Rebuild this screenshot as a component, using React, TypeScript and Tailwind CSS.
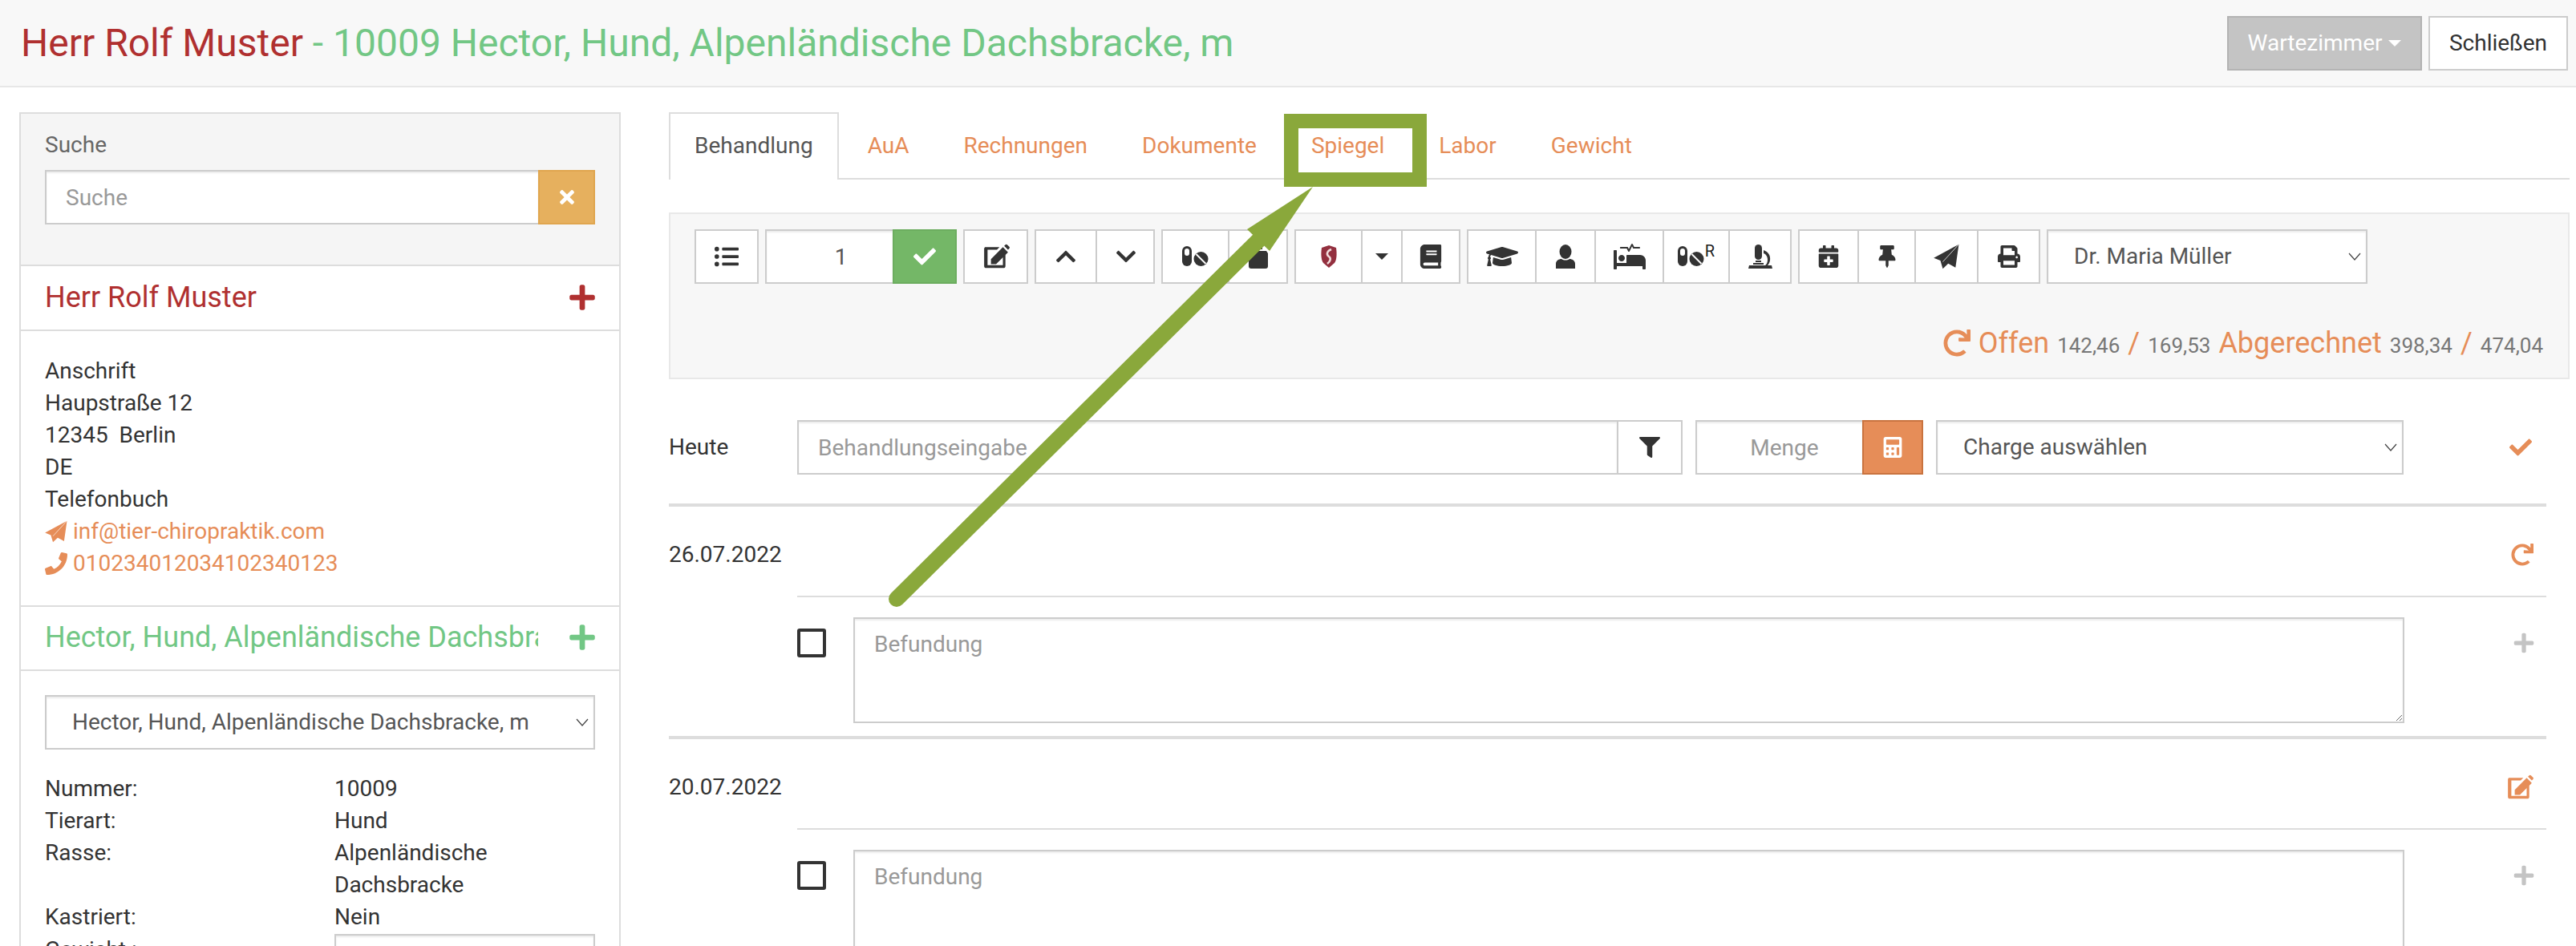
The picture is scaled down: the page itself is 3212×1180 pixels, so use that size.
import type { ReactNode } from "react";
import {
  FaBook,
  FaCalculator,
  FaCalendarPlus,
  FaCheck,
  FaChevronDown,
  FaChevronUp,
  FaFilter,
  FaGraduationCap,
  FaListUl,
  FaPhone,
  FaPlus,
  FaPrint,
  FaProcedures,
  FaRedo,
  FaThumbtack,
  FaTimes,
} from "react-icons/fa";

function Chevron() {
  return (
    <svg width="16" height="10" viewBox="0 0 16 10" className="pointer-events-none absolute right-[8px] top-1/2 -mt-[5px]">
      <path d="M1 1l7 8 7-8" fill="none" stroke="#444" strokeWidth="1.2" />
    </svg>
  );
}

function Select({ label, className }: { label: string; className: string }) {
  return (
    <div className={`relative h-[68px] shrink-0 ${className}`}>
      <select className="h-full w-full appearance-none border-2 border-[#ccc] bg-white pl-[32px] pr-[30px] text-[#555] shadow-[inset_0_2px_2px_rgba(0,0,0,0.075)]">
        <option>{label}</option>
      </select>
      <Chevron />
    </div>
  );
}

function SendIcon({ size = 28 }: { size?: number }) {
  return (
    <svg width={size} height={size} viewBox="0 0 84 85" fill="currentColor">
      <path d="M83 2L0 47l22 9 8 27 18-17 24 13z" />
      <path d="M83 2L30 60" stroke="#fff" strokeWidth="2" />
    </svg>
  );
}

function EditIcon({ size = 34 }: { size?: number }) {
  return (
    <svg width={size} height={size} viewBox="0 0 32 32" fill="currentColor">
      <path d="M3 5h17l-3 3H6v18h18V16l3-3v14a2.500 2.500 0 0 1-2.500 2.500h-20A2.500 2.500 0 0 1 2 27V7.500A2.500 2.500 0 0 1 3 5z" />
      <path d="M10 25v-6L24 5l6 6-14 14zM25.500 3.500l1.500-1.500a1.500 1.500 0 0 1 2 0l2.500 2.500a1.500 1.500 0 0 1 0 2l-1.500 1.500z" />
    </svg>
  );
}

function PillsIcon() {
  return (
    <svg width="33" height="26" viewBox="0 0 33 26">
      <rect x="0" y="0" width="12" height="25" rx="6" fill="#333" />
      <rect x="3" y="3" width="6" height="9" rx="3" fill="#fff" />
      <circle cx="23.500" cy="16" r="9" fill="#333" />
      <path d="M17.500 10l12 12" stroke="#fff" strokeWidth="2" />
    </svg>
  );
}

function ShieldLogo() {
  return (
    <svg width="22" height="28" viewBox="0 0 22 28" className="blur-[0.6px]">
      <path d="M2 3l9-3 9 3c1 7 1 15-2 19l-7 6-7-6C1 18 1 10 2 3z" fill="#93303f" />
      <path d="M14 5c-5 2-7 6-3 9 3 2 2 6-2 9" fill="none" stroke="#f0dcdc" strokeWidth="2.500" />
    </svg>
  );
}

function BottleIcon() {
  return (
    <svg width="26" height="30" viewBox="0 0 26 30" fill="#333">
      <rect x="8" y="0" width="10" height="6" />
      <path d="M3 8h20l2 3v16a3 3 0 0 1-3 3H4a3 3 0 0 1-3-3V11z" />
    </svg>
  );
}

function UserIcon() {
  return (
    <svg width="26" height="30" viewBox="0 0 26 30" fill="#333">
      <ellipse cx="13" cy="9" rx="7.500" ry="9" />
      <path d="M1 30v-6c0-4 4-6 7-6 3 2 7 2 10 0 3 0 7 2 7 6v6z" />
    </svg>
  );
}

function MicroscopeIcon() {
  return (
    <svg width="30" height="30" viewBox="0 0 30 30" fill="#333">
      <rect x="8" y="0" width="9" height="19" rx="4.500" />
      <rect x="9" y="20" width="7" height="2" />
      <path d="M19 7c6 2 9 7 8 13-.500 3-2 5-4 7h-3c3-2 4-5 4-8 0-4-2-7-5-8z" />
      <path d="M1 26h28l1 4H0z" />
      <rect x="6" y="23" width="13" height="2" />
    </svg>
  );
}

function Caret({ className }: { className: string }) {
  return <span className={`inline-block border-x-[8px] border-t-[8px] border-x-transparent ${className}`} />;
}

function Cell({ className, children }: { className: string; children: ReactNode }) {
  return <div className={`flex h-full shrink-0 items-center justify-center ${className}`}>{children}</div>;
}

function Group({ className, children }: { className: string; children: ReactNode }) {
  return (
    <div className={`flex h-[68px] shrink-0 divide-x-2 divide-[#ccc] border-2 border-[#ccc] bg-white text-[#333] ${className}`}>
      {children}
    </div>
  );
}

function Toolbar() {
  return (
    <div className="flex gap-2">
      <Group className="w-[80px]">
        <Cell className="w-full"><FaListUl size={30} /></Cell>
      </Group>
      <div className="flex h-[68px] w-[239px] shrink-0">
        <input
          defaultValue="1"
          className="h-full w-[159px] border-2 border-r-0 border-[#ccc] bg-white pl-[28px] text-center text-[#555] shadow-[inset_0_2px_2px_rgba(0,0,0,0.075)]"
        />
        <div className="flex h-full w-[80px] items-center justify-center border-2 border-[#6cad5f] bg-[#74b767] text-white">
          <FaCheck size={28} />
        </div>
      </div>
      <Group className="w-[81px]">
        <Cell className="w-full"><EditIcon /></Cell>
      </Group>
      <Group className="w-[150px]">
        <Cell className="w-[76px]"><FaChevronUp size={28} /></Cell>
        <Cell className="w-[72px]"><FaChevronDown size={28} /></Cell>
      </Group>
      <Group className="w-[158px]">
        <Cell className="w-[83px]"><PillsIcon /></Cell>
        <Cell className="w-[71px]"><BottleIcon /></Cell>
      </Group>
      <Group className="w-[207px]">
        <Cell className="w-[83px]"><ShieldLogo /></Cell>
        <Cell className="w-[50px]"><Caret className="border-t-[#333]" /></Cell>
        <Cell className="w-[70px]"><FaBook size={30} /></Cell>
      </Group>
      <Group className="w-[405px]">
        <Cell className="w-[85px]"><FaGraduationCap size={40} /></Cell>
        <Cell className="w-[74px]"><UserIcon /></Cell>
        <Cell className="w-[85px]"><FaProcedures size={40} /></Cell>
        <Cell className="w-[82px]">
          <span className="flex items-start">
            <PillsIcon />
            <span className="-mt-[6px] ml-[1px] text-[20px] leading-[24px] text-[#222]">R</span>
          </span>
        </Cell>
        <Cell className="w-[75px]"><MicroscopeIcon /></Cell>
      </Group>
      <Group className="w-[302px]">
        <Cell className="w-[74px]"><FaCalendarPlus size={28} /></Cell>
        <Cell className="w-[71px]"><FaThumbtack size={28} /></Cell>
        <Cell className="w-[78px]"><SendIcon size={32} /></Cell>
        <Cell className="w-[75px]"><FaPrint size={28} /></Cell>
      </Group>
      <Select label="Dr. Maria Müller" className="w-[400px]" />
    </div>
  );
}

function Entry({ date, icon }: { date: string; icon: ReactNode }) {
  return (
    <div className="h-[290px] border-t-4 border-[#ddd]">
      <div className="flex h-[111px] items-center justify-between pr-[16px] pt-[8px]">
        <span>{date}</span>
        <span className="text-[#e68d58]">{icon}</span>
      </div>
      <div className="ml-[160px] border-t-2 border-[#ddd]" />
      <div className="ml-[160px] mt-[25px] flex items-start">
        <span className="mt-[14px] h-[36px] w-[36px] rounded-[3px] border-4 border-[#333]" />
        <textarea
          placeholder="Befundung"
          className="ml-[34px] h-[132px] w-[1934px] border-2 border-[#ccc] px-[24px] py-[12px] placeholder:text-[#999] shadow-[inset_0_2px_2px_rgba(0,0,0,0.075)]"
        />
        <span className="ml-auto mr-[14px] mt-[18px] text-[#c4c4c4]"><FaPlus size={28} /></span>
      </div>
    </div>
  );
}

const tabs = ["AuA", "Rechnungen", "Dokumente", "Spiegel", "Labor", "Gewicht"];

function Main() {
  return (
    <div className="w-[2370px] shrink-0">
      <div className="flex gap-1 border-b-2 border-[#ddd]">
        <div className="-mb-[2px] h-[84px] border-2 border-b-0 border-[#ddd] bg-white px-[30px] pt-[20px] text-[#555]">Behandlung</div>
        {tabs.map((t) => (
          <div key={t} className="h-[82px] px-[32px] pt-[22px] text-[#e68d58]">{t}</div>
        ))}
      </div>

      <div className="mt-[41px] h-[208px] border-2 border-[#e8e8e8] bg-[#f7f7f7] pl-[30px] pr-[31px] pt-[19px]">
        <Toolbar />
        <div className="mt-[54px] flex h-[40px] items-baseline justify-end gap-[10px] text-[26px] text-[#777]">
          <span className="self-center text-[#e68d58]"><FaRedo size={34} /></span>
          <span className="text-[36px] text-[#e68d58]">Offen</span>
          <span>142,46</span>
          <span className="text-[36px] text-[#e68d58]">/</span>
          <span>169,53</span>
          <span className="text-[36px] text-[#e68d58]">Abgerechnet</span>
          <span>398,34</span>
          <span className="text-[36px] text-[#e68d58]">/</span>
          <span>474,04</span>
        </div>
      </div>

      <div className="w-[2341px]">
        <div className="mt-[51px] flex h-[68px] items-center">
          <span className="w-[160px] shrink-0">Heute</span>
          <input
            placeholder="Behandlungseingabe"
            className="h-full w-[1024px] border-2 border-[#ccc] px-[24px] placeholder:text-[#999] shadow-[inset_0_2px_2px_rgba(0,0,0,0.075)]"
          />
          <div className="flex h-full w-[80px] items-center justify-center border-2 border-l-0 border-[#ccc] text-[#333]">
            <FaFilter size={26} />
          </div>
          <input
            placeholder="Menge"
            className="ml-[16px] h-full w-[208px] border-2 border-r-0 border-[#ccc] pl-[12px] text-center placeholder:text-[#999] shadow-[inset_0_2px_2px_rgba(0,0,0,0.075)]"
          />
          <div className="flex h-full w-[76px] items-center justify-center border-2 border-[#c9733f] bg-[#e68d58] text-[#fff]">
            <FaCalculator size={26} />
          </div>
          <Select label="Charge auswählen" className="ml-[16px] w-[583px]" />
          <span className="ml-auto mr-[18px] text-[#e68d58]"><FaCheck size={28} /></span>
        </div>
        <div className="mt-[36px]">
          <Entry date="26.07.2022" icon={<FaRedo size={28} />} />
          <Entry date="20.07.2022" icon={<EditIcon size={34} />} />
        </div>
      </div>
    </div>
  );
}

function Sidebar() {
  return (
    <div className="w-[750px] shrink-0 border-2 border-[#ddd]">
      <div className="h-[190px] border-b-2 border-[#ddd] bg-[#f5f5f5] px-[30px] pt-[19px]">
        <div className="text-[#666]">Suche</div>
        <div className="mt-[11px] flex h-[68px]">
          <input
            placeholder="Suche"
            className="h-full w-[615px] border-2 border-r-0 border-[#ccc] bg-white px-[24px] placeholder:text-[#999] shadow-[inset_0_2px_2px_rgba(0,0,0,0.075)]"
          />
          <div className="flex h-full w-[71px] items-center justify-center border-2 border-[#e0a64f] bg-[#e6b05e] text-white">
            <FaTimes size={26} />
          </div>
        </div>
      </div>

      <div className="flex h-[81px] items-center justify-between border-b-2 border-[#ddd] pb-[2px] pl-[30px] pr-[28px] text-[36px] text-[#b03030]">
        <span>Herr Rolf Muster</span>
        <FaPlus size={36} />
      </div>

      <div className="h-[344px] border-b-2 border-[#ddd] px-[30px] pt-[30px]">
        <div>Anschrift</div>
        <div>Haupstraße 12</div>
        <div className="whitespace-pre">12345  Berlin</div>
        <div>DE</div>
        <div>Telefonbuch</div>
        <div className="flex items-center gap-[7px] text-[#e68d58]"><SendIcon /> inf@tier-chiropraktik.com</div>
        <div className="flex items-center gap-[7px] text-[#e68d58]"><FaPhone size={28} /> 010234012034102340123</div>
      </div>

      <div className="flex h-[80px] items-center justify-between border-b-2 border-[#ddd] pb-[2px] pl-[30px] pr-[28px] text-[36px] text-[#72c785]">
        <span className="w-[615px] overflow-hidden whitespace-nowrap">Hector, Hund, Alpenländische Dachsbracke, m</span>
        <FaPlus size={36} />
      </div>

      <div className="px-[30px] pt-[30px]">
        <Select label="Hector, Hund, Alpenländische Dachsbracke, m" className="w-full" />
        <div className="mt-[29px] grid grid-cols-[361px_1fr]">
          <div>Nummer:</div><div>10009</div>
          <div>Tierart:</div><div>Hund</div>
          <div>Rasse:</div><div className="w-[240px]">Alpenländische Dachsbracke</div>
          <div>Kastriert:</div><div>Nein</div>
          <div className="pt-[1px]">Gewicht :</div>
          <input className="mt-[1px] h-[68px] w-full min-w-0 border-2 border-[#ccc] shadow-[inset_0_2px_2px_rgba(0,0,0,0.075)]" />
        </div>
      </div>
    </div>
  );
}

export default function App() {
  return (
    <div className="relative h-[1180px] w-[3212px] overflow-hidden bg-white font-['Roboto',sans-serif] text-[28px] leading-[40px] text-[#333]">
      <header className="flex h-[109px] items-center justify-between border-b-2 border-[#e7e7e7] bg-[#f8f8f8] pl-[26px] pr-[10px]">
        <h1 className="text-[48px] font-normal text-[#b03030]">
          Herr Rolf Muster <span className="text-[#72c785]">- 10009 Hector, Hund, Alpenländische Dachsbracke, m</span>
        </h1>
        <div className="flex gap-[8px]">
          <div className="flex h-[68px] w-[243px] items-center justify-center gap-[8px] border-2 border-[#b3b3b3] bg-[#c4c4c4] text-white">
            Wartezimmer <Caret className="border-t-white" />
          </div>
          <div className="flex h-[68px] w-[174px] items-center justify-center border-2 border-[#ccc] bg-white">Schließen</div>
        </div>
      </header>

      <div className="flex gap-[60px] pl-[24px] pt-[31px]">
        <Sidebar />
        <Main />
      </div>

      {/* annotation on top of the page: box round the Spiegel tab and the arrow */}
      <div className="absolute left-[1601px] top-[142px] h-[91px] w-[178px] border-[18px] border-[#8aa83b]" />
      <svg className="absolute left-0 top-0" width="3212" height="1180" fill="#8aa83b">
        <path d="M1118 747L1569 300" stroke="#8aa83b" strokeWidth="20" strokeLinecap="round" />
        <path d="M1637 233L1555 286L1583 313z" />
      </svg>
    </div>
  );
}
